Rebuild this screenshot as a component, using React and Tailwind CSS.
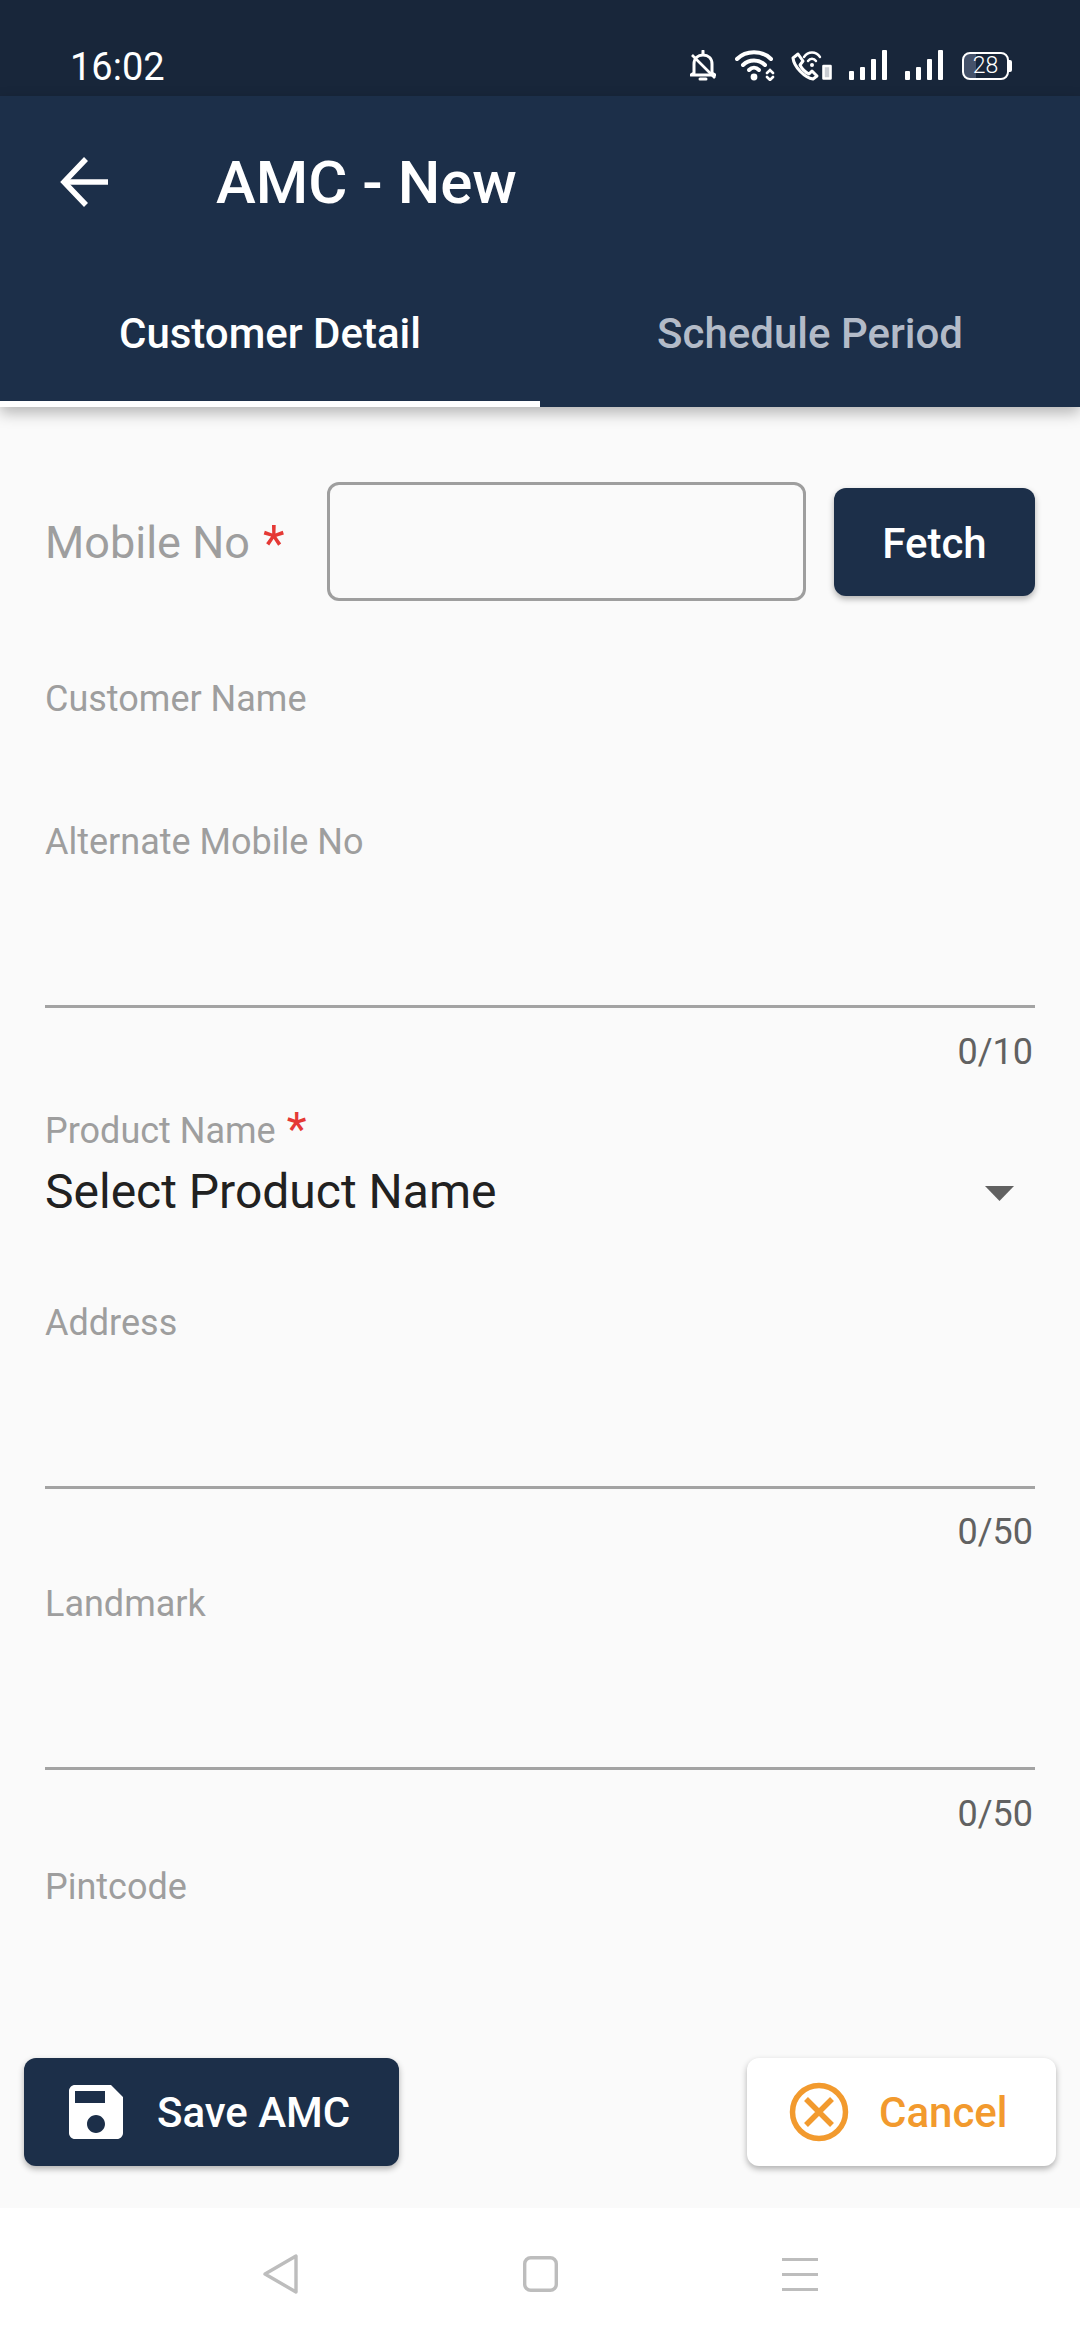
const FONT = "font-['Roboto','Liberation_Sans',sans-serif]";

function StatusIcons() {
  return (
    <div className="flex items-center">
      {/* bell off */}
      <svg width="26" height="31" viewBox="0 0 26 31" fill="none" stroke="#fff" strokeWidth="3" strokeLinejoin="round">
        <path d="M4 23 V14 C4 8 8 5 13 5 C18 5 22 8 22 14 V23 L25 25 H1 Z" />
        <path d="M2 5 L25 28" strokeWidth="2.6" />
        <path d="M13 1 V4 M10 29 H16" strokeLinecap="round" />
      </svg>
      {/* wifi */}
      <svg className="ml-[19px]" width="40" height="31" viewBox="0 0 40 31" fill="none" stroke="#fff" strokeWidth="4" strokeLinecap="round">
        <path d="M2 9 C11 0 27 0 36 9" />
        <path d="M8 15 C14 9 24 9 30 15" />
        <path d="M14 20 C17 17 21 17 24 20" />
        <circle cx="19" cy="27" r="3.4" fill="#fff" stroke="none" />
        <path d="M32 23 L35 20 L38 23 M32 27 L35 30 L38 27" strokeWidth="2.6" />
      </svg>
      {/* wifi calling */}
      <svg className="ml-[16px]" width="41" height="31" viewBox="0 0 41 31" fill="none" stroke="#fff" strokeWidth="3" strokeLinejoin="round">
        <path d="M2 8 L7 4 L12 11 L9 15 C11 19 14 22 18 24 L21 21 L26 26 L22 29 C14 28 3 17 2 8 Z" />
        <path d="M13 7 C17 1 25 1 29 7 M17 11 C19 8 23 8 25 11" strokeWidth="2.4" strokeLinecap="round" />
        <circle cx="21" cy="15" r="2" fill="#fff" stroke="none" />
        <rect x="32.5" y="16" width="7" height="12.5" strokeWidth="2.6" fill="#c8ccd2" />
      </svg>
      {/* signal 1 */}
      <svg className="ml-[17px]" width="39" height="31" viewBox="0 0 39 31" fill="#fff">
        <rect x="0" y="21" width="5" height="9" rx="1" />
        <rect x="11" y="17" width="5" height="13" rx="1" />
        <rect x="22" y="9" width="5" height="21" rx="1" />
        <rect x="33" y="0" width="5" height="30" rx="1" />
      </svg>
      {/* signal 2 */}
      <svg className="ml-[17px]" width="39" height="31" viewBox="0 0 39 31" fill="#fff">
        <rect x="0" y="21" width="5" height="9" rx="1" />
        <rect x="11" y="17" width="5" height="13" rx="1" />
        <rect x="22" y="9" width="5" height="21" rx="1" />
        <rect x="33" y="0" width="5" height="30" rx="1" />
      </svg>
      {/* battery */}
      <div className="ml-[18px] flex items-center">
        <div className="w-[47px] h-[28px] rounded-[8px] border-[2.5px] border-white bg-[linear-gradient(90deg,#45526a_0%,#45526a_28%,#18263a_28%)] flex items-center justify-center">
          <span className="text-[23px] leading-none text-white font-light">28</span>
        </div>
        <div className="w-[3px] h-[12px] bg-white rounded-r-[2px]" />
      </div>
    </div>
  );
}

function Counter({ text, className }) {
  return <div className={`h-[40px] leading-[42px] text-right pr-[2px] text-[36px] text-[#616161] ${className}`}>{text}</div>;
}

function Label({ text, className }) {
  return <div className={`h-[50px] leading-[55px] text-[36px] text-[#9e9e9e] ${className}`}>{text}</div>;
}

function Line({ className }) {
  return <div className={`h-[3px] bg-[#a3a3a3] ${className}`} />;
}

export default function App() {
  return (
    <div className={`${FONT} w-[1080px] h-[2340px] flex flex-col overflow-hidden bg-white`}>
      {/* status bar */}
      <div className="h-[96px] bg-[#18263a] flex items-end justify-between pl-[70px] pr-[68px] pb-[15px]">
        <span className="-mb-[5px] text-[38px] leading-[38px] text-white">16:02</span>
        <StatusIcons />
      </div>

      {/* app bar + tabs */}
      <div className="relative z-10 bg-[#1c2f49] shadow-[0_6px_14px_rgba(0,0,0,0.28)]">
        <div className="h-[168px] flex items-center pl-[60px]">
          <svg className="mt-[3px]" width="50" height="50" viewBox="0 0 50 50" fill="none" stroke="#fff" strokeWidth="5.5">
            <path d="M48 25 H4" />
            <path d="M26 2 L4 25 L26 48" />
          </svg>
          <span className="ml-[106px] pt-[6px] text-[60px] leading-none font-medium text-white">AMC - New</span>
        </div>
        <div className="h-[143px] flex">
          <div className="w-[540px] flex flex-col border-b-[6px] border-white">
            <div className="flex-1 flex items-center justify-center pt-[2px] text-[42px] font-medium text-white">Customer Detail</div>
          </div>
          <div className="w-[540px] flex items-center justify-center pb-[4px] text-[42px] font-medium text-[#b3bbc8]">Schedule Period</div>
        </div>
      </div>

      {/* form */}
      <div className="flex-1 bg-[#fafafa] px-[45px] flex flex-col overflow-hidden">
        <div className="mt-[75px] h-[119px] flex items-center">
          <div className="w-[282px] pt-[2px] text-[45px] text-[#9e9e9e]">
            Mobile No <span className="ml-[2px] text-[50px] leading-none align-[-3px] text-[#e53935]">*</span>
          </div>
          <div className="w-[479px] h-[119px] rounded-[12px] border-[3px] border-[#9e9e9e]" />
          <div className="ml-[28px] w-[201px] h-[108px] rounded-[12px] bg-[#1c2f49] shadow-[0_3px_6px_rgba(0,0,0,0.3)] flex items-center justify-center pt-[3px] text-[42px] font-medium text-white">
            Fetch
          </div>
        </div>

        <Label text="Customer Name" className="mt-[71px]" />
        <Label text="Alternate Mobile No" className="mt-[93px]" />
        <Line className="mt-[140px]" />
        <Counter text="0/10" className="mt-[23px]" />

        <div className="mt-[33px] h-[50px] leading-[55px] text-[36px] text-[#9e9e9e]">
          Product Name <span className="ml-[2px] text-[46px] leading-none align-[-2px] text-[#e53935]">*</span>
        </div>
        <div className="mt-[7px] h-[56px] flex items-center justify-between pr-[21px]">
          <span className="pt-[6px] text-[48px] leading-[56px] text-[#212121]">Select Product Name</span>
          <svg className="mt-[8px]" width="29" height="15" viewBox="0 0 29 15" fill="#616161">
            <path d="M0 0 H29 L14.5 15 Z" />
          </svg>
        </div>

        <Label text="Address" className="mt-[79px]" />
        <Line className="mt-[140px]" />
        <Counter text="0/50" className="mt-[22px]" />
        <Label text="Landmark" className="mt-[26px]" />
        <Line className="mt-[140px]" />
        <Counter text="0/50" className="mt-[23px]" />
        <Label text="Pintcode" className="mt-[27px]" />

        {/* action buttons */}
        <div className="mt-auto mb-[42px] -mx-[21px] flex justify-between items-center">
          <div className="w-[375px] h-[108px] rounded-[12px] bg-[#1c2f49] shadow-[0_3px_6px_rgba(0,0,0,0.3)] flex items-center pl-[36px]">
            <svg width="72" height="72" viewBox="0 0 24 24" fill="#fff">
              <path d="M17 3H5c-1.11 0-2 .9-2 2v14c0 1.1.89 2 2 2h14c1.1 0 2-.9 2-2V7l-4-4zm-5 16c-1.66 0-3-1.34-3-3s1.34-3 3-3 3 1.34 3 3-1.34 3-3 3zm3-10H5V5h10v4z" />
            </svg>
            <span className="ml-[25px] text-[42px] font-medium text-white">Save AMC</span>
          </div>
          <div className="w-[309px] h-[108px] rounded-[12px] bg-white shadow-[0_3px_6px_rgba(0,0,0,0.3)] flex items-center pl-[42px]">
            <svg width="60" height="60" viewBox="0 0 60 60" fill="none" stroke="#f29a2e" strokeWidth="5.5">
              <circle cx="30" cy="30" r="26.5" />
              <path d="M17 17 L43 43 M43 17 L17 43" />
            </svg>
            <span className="ml-[30px] text-[42px] font-medium text-[#f29a2e]">Cancel</span>
          </div>
        </div>
      </div>

      {/* system nav */}
      <div className="h-[132px] bg-white flex items-center justify-center gap-[224px]">
        <svg width="36" height="40" viewBox="0 0 36 40" fill="none" stroke="#bdbdbd" strokeWidth="3.4" strokeLinejoin="round">
          <path d="M33 2 V38 L2 20 Z" />
        </svg>
        <svg width="35" height="36" viewBox="0 0 35 36" fill="none" stroke="#bdbdbd" strokeWidth="3.4">
          <rect x="1.7" y="1.7" width="31.6" height="32.6" rx="6" />
        </svg>
        <svg width="36" height="33" viewBox="0 0 36 33" fill="#bdbdbd">
          <rect x="0" y="0" width="36" height="3" />
          <rect x="0" y="15" width="36" height="3" />
          <rect x="0" y="30" width="36" height="3" />
        </svg>
      </div>
    </div>
  );
}
